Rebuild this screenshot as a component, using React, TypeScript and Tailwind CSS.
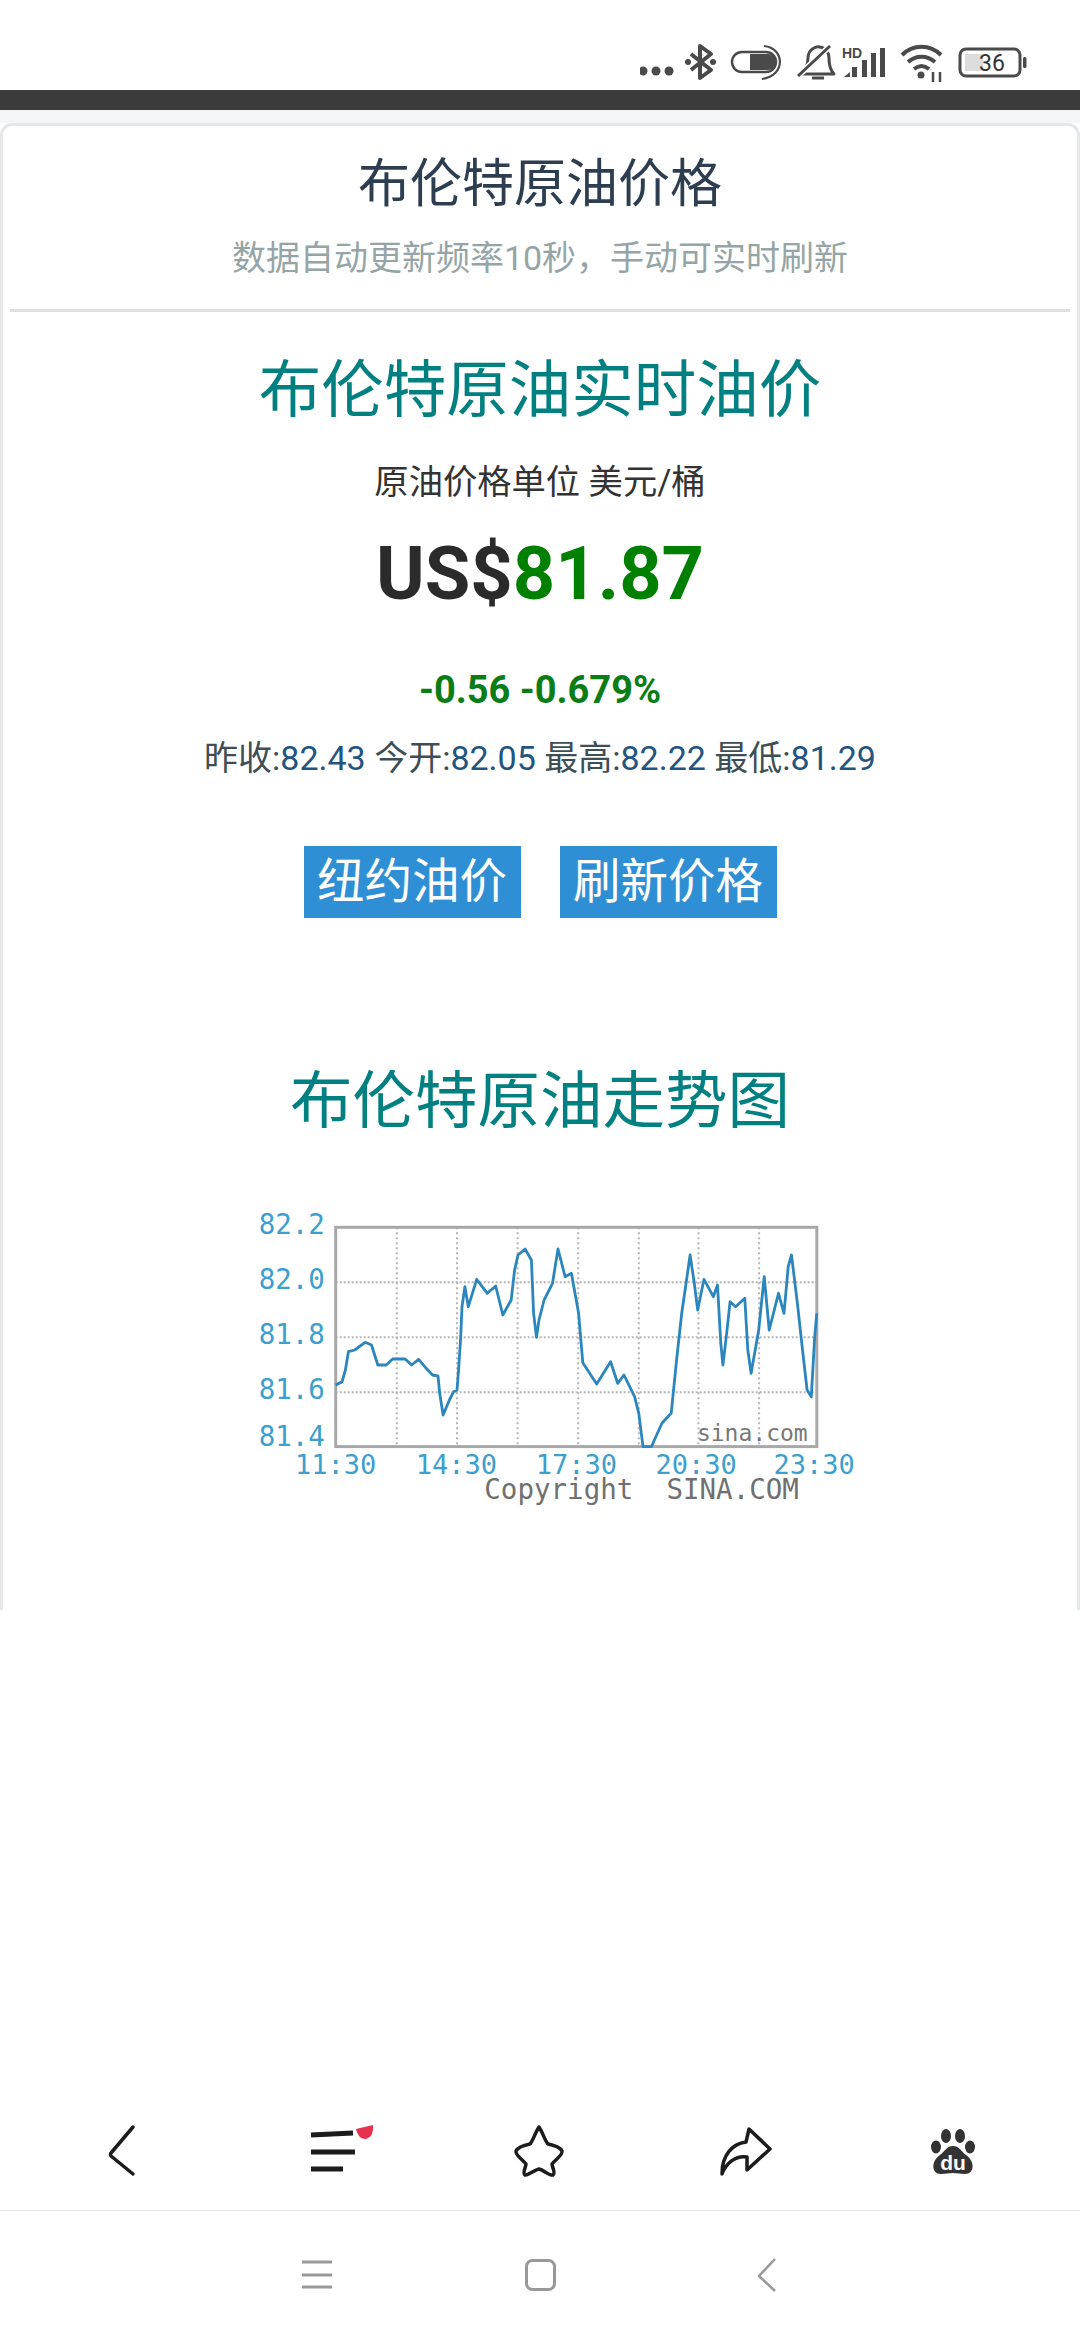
import React from 'react';

const zx = (x: number) => +(x / 2.376).toFixed(1);
const zy = (y: number) => +(y / 3).toFixed(1);

// traced off the reference crop
const priceLine = [
  [275, 615], [290, 605], [298, 570], [305, 515], [320, 510], [345, 487], [360, 495], [375, 555], [395, 555], [410, 537], [440, 537],
  [455, 555], [472, 538], [490, 565], [505, 585], [518, 588], [522, 640], [530, 705], [545, 660], [555, 635], [563, 630], [567, 570],
  [572, 470], [575, 380], [582, 320], [590, 380], [610, 298], [635, 340], [655, 318], [672, 405], [692, 360], [700, 270], [708, 225], [725, 207],
  [740, 240], [745, 400], [752, 472], [758, 420], [770, 360], [790, 310], [803, 207], [820, 290], [835, 280], [852, 400], [862, 548], [895, 612],
  [928, 545], [945, 610], [960, 585], [985, 650], [995, 700], [1005, 800], [1025, 800], [1050, 730], [1072, 700], [1085, 540], [1097, 400],
  [1105, 330], [1117, 225], [1127, 310], [1135, 390], [1150, 298], [1172, 350], [1182, 315], [1190, 490], [1195, 555], [1203, 470], [1212, 365], [1225, 380],
  [1247, 355], [1254, 510], [1262, 580], [1280, 450], [1293, 290], [1305, 450], [1327, 340], [1340, 400], [1350, 260], [1358, 225], [1372, 370],
  [1385, 520], [1395, 630], [1405, 650], [1413, 470], [1418, 400],
];

const yLabels = [['82.2', 135], ['82.0', 300], ['81.8', 465], ['81.6', 630], ['81.4', 770]] as const;
const xLabels = [['11:30', 178], ['14:30', 465], ['17:30', 750], ['20:30', 1035], ['23:30', 1315]] as const;

const PriceChart = () => (
  <svg width="660" height="340" viewBox="0 0 660 340" className="block mx-auto translate-x-[10px]" fontFamily="'DejaVu Sans Mono', monospace">
    {[420, 563, 707, 851, 995, 1137, 1281].map((x) => (
      <line key={x} x1={zx(x)} x2={zx(x)} y1={zy(142)} y2={zy(800)} stroke="#b5b5b5" strokeWidth="2" strokeDasharray="2 3" />
    ))}
    {[307, 472, 637].map((y) => (
      <line key={y} x1={zx(275)} x2={zx(1418)} y1={zy(y)} y2={zy(y)} stroke="#b5b5b5" strokeWidth="2" strokeDasharray="2 2" />
    ))}
    <rect x={zx(275)} y={zy(142)} width={zx(1143)} height={zy(658)} fill="none" stroke="#a8a8a8" strokeWidth="3" />
    <polyline
      points={priceLine.map(([x, y]) => `${zx(x)},${zy(y)}`).join(' ')}
      fill="none"
      stroke="#2a86bd"
      strokeWidth="2.8"
      strokeLinejoin="round"
    />
    {yLabels.map(([label, y]) => (
      <text key={label} x={zx(92)} y={zy(y) + 9} fontSize="27.5" fill="#3b9fcf">{label}</text>
    ))}
    {xLabels.map(([label, x]) => (
      <text key={label} x={zx(x)} y={zy(855) + 9} fontSize="27" fill="#3b9fcf">{label}</text>
    ))}
    <text x={zx(1133)} y={zy(760) + 8} fontSize="23" fill="#777777">sina.com</text>
    <text x={zx(628)} y={zy(930) + 9} fontSize="27.5" fill="#707070" xmlSpace="preserve">Copyright  SINA.COM</text>
  </svg>
);

const StatusIcons = () => (
  <svg width="400" height="50" viewBox="0 0 400 50" fill="none" stroke="#4a4a4a" className="block">
    {/* dots */}
    <circle cx="3" cy="31" r="4.5" fill="#4a4a4a" stroke="none" />
    <circle cx="16" cy="31" r="4.5" fill="#4a4a4a" stroke="none" />
    <circle cx="29" cy="31" r="4.5" fill="#4a4a4a" stroke="none" />
    {/* bluetooth */}
    <path d="M51 14 L71 30 L60 38 L60 6 L71 14 L51 30" strokeWidth="4" strokeLinejoin="round" />
    <circle cx="48" cy="22" r="3" fill="#4a4a4a" stroke="none" />
    <circle cx="73" cy="22" r="3" fill="#4a4a4a" stroke="none" />
    {/* toggle */}
    <rect x="92" y="12" width="44" height="20" rx="10" strokeWidth="2.5" />
    <path d="M110 14 H128 a8 8 0 0 1 0 16 H110 Z" fill="#4a4a4a" stroke="none" />
    <path d="M124 6 C145 8 146 36 122 39" strokeWidth="2.2" />
    {/* muted bell */}
    <path d="M160 34 C166 30 168 24 168 18 C168 10 175 6 180 7 C186 8 189 13 189 18 C189 24 190 30 194 34 Z" strokeWidth="3" strokeLinejoin="round" />
    <path d="M172 38 H184" strokeWidth="3" />
    <path d="M158 36 L190 6" stroke="#ffffff" strokeWidth="6" />
    <path d="M158 36 L190 6" strokeWidth="3" />
    {/* HD signal */}
    <text x="202" y="18" fontSize="14" fontWeight="700" fill="#4a4a4a" stroke="none" fontFamily="'Liberation Sans', sans-serif">HD</text>
    <path d="M204 37 L210 32 V37 Z" fill="#4a4a4a" stroke="none" />
    <rect x="212" y="27" width="5" height="10" fill="#4a4a4a" stroke="none" />
    <rect x="222" y="20" width="5" height="17" fill="#4a4a4a" stroke="none" />
    <rect x="231" y="13" width="5" height="24" fill="#4a4a4a" stroke="none" />
    <rect x="240" y="8" width="5" height="29" fill="#4a4a4a" stroke="none" />
    {/* wifi */}
    <path d="M262 15 C273 4 290 4 301 15" strokeWidth="4" />
    <path d="M268 22 C276 15 287 15 295 22" strokeWidth="4" />
    <path d="M274 29 C279 25 284 25 289 29" strokeWidth="4" />
    <circle cx="281" cy="35" r="3.5" fill="#4a4a4a" stroke="none" />
    <path d="M293 42 V32 M300 42 V32" strokeWidth="2.5" />
    {/* battery */}
    <rect x="320" y="9" width="60" height="27" rx="6" strokeWidth="3" />
    <rect x="325" y="14" width="18" height="17" fill="#dddddd" stroke="none" />
    <rect x="383" y="17" width="3.5" height="11" rx="1.5" fill="#4a4a4a" stroke="none" />
    <text x="352" y="31" textAnchor="middle" fontSize="23" fill="#333333" stroke="none" fontFamily="Roboto, sans-serif">36</text>
  </svg>
);

const BrowserBar = () => (
  <div className="h-[113px] relative">
    <svg width="1080" height="113" viewBox="0 0 1080 113" fill="none" stroke="#1c1c1c" className="block">
      {/* back */}
      <path d="M133 30 L111 56 Q110 57 111 59 L133 77" strokeWidth="3.5" strokeLinecap="round" strokeLinejoin="round" />
      {/* tabs */}
      <path d="M311 38 L353 36 M311 55 H355 M311 72 H343" strokeWidth="5" />
      <path d="M356 32 L373 28 Q374 40 366 42 Q358 42 356 32 Z" fill="#e8304f" stroke="none" />
      {/* star */}
      <path d="M539 30 C543 36 545 44 548 47 C553 48 560 50 562 54 C563 58 556 62 552 67 C552 70 556 76 553 78 C549 79 544 73 539 72 C534 73 528 79 525 78 C522 76 526 70 526 67 C522 62 515 58 516 54 C518 50 525 48 530 47 C533 44 535 36 539 30 Z" strokeWidth="3.5" strokeLinejoin="round" />
      {/* share */}
      <path d="M722 77 C726 66 736 58 747 60 L747 73 L770 52 L749 32 L746 45 C732 47 722 58 722 77 Z" strokeWidth="3.5" strokeLinejoin="round" />
      {/* baidu paw */}
      <g fill="#333333" stroke="none">
        <ellipse cx="946" cy="39" rx="5" ry="7" />
        <ellipse cx="960" cy="39" rx="5" ry="7" />
        <ellipse cx="936" cy="50" rx="5" ry="6.5" />
        <ellipse cx="970" cy="50" rx="5" ry="6.5" />
        <path d="M953 49 C959 49 960 53 966 58 C975 64 975 77 965 77 C960 77 957 76 953 76 C949 76 946 77 941 77 C931 77 931 64 940 58 C946 53 947 49 953 49 Z" />
      </g>
      <text x="953" y="73" textAnchor="middle" fontSize="21" fontWeight="700" fill="#ffffff" stroke="none" fontFamily="'Liberation Sans', sans-serif">du</text>
    </svg>
  </div>
);

const SystemNav = () => (
  <svg width="1080" height="129" viewBox="0 0 1080 129" fill="none" stroke="#999999" className="block">
    <path d="M302 51 H332 M302 64 H332 M302 76 H332" strokeWidth="3" />
    <rect x="526.5" y="49.5" width="28" height="29" rx="6" strokeWidth="3" />
    <path d="M775 48 L759 65 L775 80" strokeWidth="2.5" strokeLinejoin="round" />
  </svg>
);

const App = () => {
  return (
    <div className="w-[1080px] h-[2340px] flex flex-col bg-white overflow-hidden font-['Roboto','Noto_Sans_CJK_SC',sans-serif]">
      <div className="h-[90px] flex justify-end pt-[40px] pr-[40px]">
        <StatusIcons />
      </div>
      <div className="h-[20px] bg-[#3b3b3b]" />
      <div className="h-[13px] bg-[#f4f5f7]" />

      {/* price card */}
      <div className="h-[1487px] border-x-[3px] border-t-[3px] border-[#e6e7e9] rounded-t-[12px] text-center">
        <h1 className="pt-[29px] text-[52px] leading-[60px] text-[#2c3e50]">布伦特原油价格</h1>
        <p className="mt-[23px] text-[34px] leading-[40px] text-[#95a5a6]">数据自动更新频率10秒，手动可实时刷新</p>
        <div className="mt-[31px] mx-[7px] h-[3px] bg-[#e0e0e0]" />

        <h2 className="mt-[44px] text-[62.5px] leading-[70px] text-[#008080]">布伦特原油实时油价</h2>
        <p className="mt-[36px] text-[34.3px] leading-[40px] text-[#333333]">原油价格单位 美元/桶</p>
        <p className="mt-[32px] text-[74px] leading-[80px] font-bold text-[#2b2b2b]">
          US$<span className="text-[#008000]">81.87</span>
        </p>
        <p className="mt-[54px] text-[38px] leading-[44px] font-bold text-[#0b7d16]">-0.56 -0.679%</p>
        <p className="mt-[26px] text-[34px] leading-[40px] text-[#3d4f55]">
          昨收:<span className="text-[#1f5580]">82.43</span> 今开:<span className="text-[#1f5580]">82.05</span> 最高:<span className="text-[#1f5580]">82.22</span> 最低:<span className="text-[#1f5580]">81.29</span>
        </p>

        <div className="mt-[68px] flex justify-center gap-[39px]">
          <button className="w-[217px] h-[72px] bg-[#2f8fd5] text-white text-[47.5px] leading-[71px]">纽约油价</button>
          <button className="w-[217px] h-[72px] bg-[#2f8fd5] text-white text-[47.5px] leading-[71px]">刷新价格</button>
        </div>

        <h2 className="mt-[149px] text-[62.5px] leading-[70px] text-[#008080]">布伦特原油走势图</h2>
        <div className="mt-[43px]">
          <PriceChart />
        </div>
      </div>

      <div className="flex-1" />
      <BrowserBar />
      <div className="h-[1px] bg-[#e5e5e5]" />
      <SystemNav />
    </div>
  );
};

export default App;
